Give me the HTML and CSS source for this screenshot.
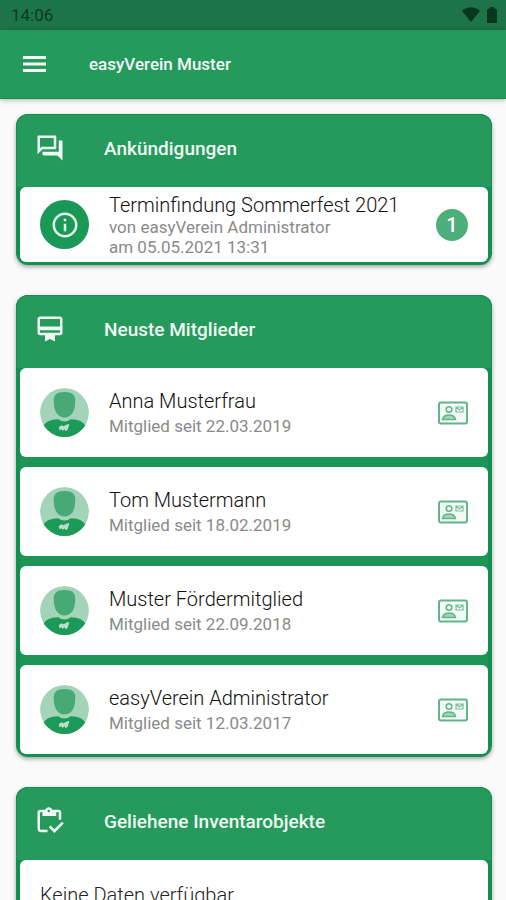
FILE: index.html
```
<!DOCTYPE html>
<html lang="de">
<head>
    <meta charset="UTF-8">
    <meta name="viewport" content="width=device-width, initial-scale=1.0">
    <title>easyVerein Muster</title>
    <link rel="stylesheet" href="styles.css">
</head>
<body>
    <!-- Shared icons -->
    <svg class="sprite" aria-hidden="true">
        <symbol id="avatar" viewBox="0 0 50 50">
            <clipPath id="avatarClip"><circle cx="25" cy="25" r="25"/></clipPath>
            <g clip-path="url(#avatarClip)">
                <circle cx="25" cy="25" r="25" fill="#a3d3b8"/>
                <path fill="#46a976" d="M14 13c0-6 3-9 11-9s11 3 11 9c0 11-4 17-11 17S14 24 14 13z"/>
                <path fill="#1c9a58" d="M3 40c2-5 7-8 16-8 3 3 9 3 12 0 9 0 14 3 16 8v12H3z"/>
                <path fill="#b9dfca" d="M19 40l3-2 2 1 4-2h2l-1 3-1 3-2 1-1-2-2 2-1-2-2 1z"/>
            </g>
        </symbol>
        <symbol id="contact" viewBox="0 0 30 24">
            <rect x="1" y="1.500" width="28" height="21" rx="2" fill="#f3faf6" stroke="#62b58a" stroke-width="2"/>
            <circle cx="11" cy="8.500" r="2.800" fill="none" stroke="#62b58a" stroke-width="1.600"/>
            <path d="M4.500 18.500c1-6 12-6 13 0z" fill="#a3d3b8" stroke="#62b58a" stroke-width="1.500"/>
            <path d="M18 6h7v5h-7zM18 6l3.500 3L25 6" fill="none" stroke="#78bf99" stroke-width="1.200"/>
        </symbol>
    </svg>

    <!-- Status Bar -->
    <div class="status-bar">
        <span>14:06</span>
        <div class="status-icons">
            <svg width="18" height="16" viewBox="0 0 18 16"><path d="M0 4c5-5 13-5 18 0L9 15z"/></svg>
            <svg width="10" height="16" viewBox="0 0 10 16"><path d="M3 0h4v1.500h1.500L10 3v13H0V3l1.500-1.500H3z"/></svg>
        </div>
    </div>

    <!-- App Bar -->
    <header class="app-bar">
        <button class="menu-button" aria-label="Menü">
            <svg width="23" height="16" viewBox="0 0 23 16"><path d="M0 0h23v3H0zM0 6.500h23v3H0zM0 13h23v3H0z"/></svg>
        </button>
        <h1>easyVerein Muster</h1>
    </header>

    <main>
        <section class="card">
            <div class="card-header">
                <svg class="card-icon" viewBox="0 0 24 24"><path d="M15 4v7H5.170L4 12.170V4h11m1-2H3c-.55 0-1 .45-1 1v14l4-4h10c.55 0 1-.45 1-1V3c0-.55-.45-1-1-1zm5 4h-2v9H6v2c0 .55.45 1 1 1h11l4 4V7c0-.55-.45-1-1-1z"/></svg>
                <h2>Ankündigungen</h2>
            </div>
            <div class="items">
                <article class="item news">
                    <div class="round-icon">
                        <svg width="30" height="30" viewBox="0 0 24 24"><path d="M11 7h2v2h-2zm0 4h2v6h-2zm1-9C6.480 2 2 6.480 2 12s4.480 10 10 10 10-4.480 10-10S17.520 2 12 2zm0 18c-4.410 0-8-3.590-8-8s3.590-8 8-8 8 3.590 8 8-3.590 8-8 8z"/></svg>
                    </div>
                    <div class="item-text">
                        <h3>Terminfindung Sommerfest 2021</h3>
                        <p>von easyVerein Administrator</p>
                        <p>am 05.05.2021 13:31</p>
                    </div>
                    <span class="badge">1</span>
                </article>
            </div>
        </section>

        <section class="card">
            <div class="card-header">
                <svg class="card-icon" viewBox="0 0 24 24"><path d="M20 2H4c-1.110 0-2 .89-2 2v11c0 1.110.89 2 2 2h4v5l4-2 4 2v-5h4c1.110 0 2-.89 2-2V4c0-1.110-.89-2-2-2zm0 13H4v-2h16v2zm0-5H4V4h16v6z"/></svg>
                <h2>Neuste Mitglieder</h2>
            </div>
            <div class="items">
                <article class="item">
                    <svg class="avatar"><use href="#avatar"/></svg>
                    <div class="item-text">
                        <h3>Anna Musterfrau</h3>
                        <p>Mitglied seit 22.03.2019</p>
                    </div>
                    <button class="contact" aria-label="Kontakt"><svg width="30" height="24"><use href="#contact"/></svg></button>
                </article>
                <article class="item">
                    <svg class="avatar"><use href="#avatar"/></svg>
                    <div class="item-text">
                        <h3>Tom Mustermann</h3>
                        <p>Mitglied seit 18.02.2019</p>
                    </div>
                    <button class="contact" aria-label="Kontakt"><svg width="30" height="24"><use href="#contact"/></svg></button>
                </article>
                <article class="item">
                    <svg class="avatar"><use href="#avatar"/></svg>
                    <div class="item-text">
                        <h3>Muster Fördermitglied</h3>
                        <p>Mitglied seit 22.09.2018</p>
                    </div>
                    <button class="contact" aria-label="Kontakt"><svg width="30" height="24"><use href="#contact"/></svg></button>
                </article>
                <article class="item">
                    <svg class="avatar"><use href="#avatar"/></svg>
                    <div class="item-text">
                        <h3>easyVerein Administrator</h3>
                        <p>Mitglied seit 12.03.2017</p>
                    </div>
                    <button class="contact" aria-label="Kontakt"><svg width="30" height="24"><use href="#contact"/></svg></button>
                </article>
            </div>
        </section>

        <section class="card">
            <div class="card-header">
                <svg class="card-icon" viewBox="0 0 24 24"><path d="M10 21H5c-1.660 0-3-1-3-3V5c0-1.100.9-2 2-2h4.200C8.600 1.800 9.700 1 11 1s2.400.8 2.800 2H19c1.100 0 2 .9 2 2v6h-2V5h-2v3H6V5H4v13c0 .6.4 1 1 1h5v2zM11 3a1 1 0 100 2 1 1 0 000-2zm10.600 9.500L23 14l-7.500 7.500L11 17l1.400-1.500 3.100 3.100z"/></svg>
                <h2>Geliehene Inventarobjekte</h2>
            </div>
            <div class="items">
                <div class="item empty">Keine Daten verfügbar.</div>
            </div>
        </section>
    </main>
</body>
</html>
```
FILE: styles.css
```
* { box-sizing: border-box; }
body { margin: 0; height: 100vh; display: flex; flex-direction: column; overflow: hidden; background-color: #fafafa; font-family: Roboto, sans-serif; }
h1, h2, h3, p { margin: 0; }
button { padding: 0; border: none; background: none; cursor: pointer; }
svg { display: block; flex-shrink: 0; }
.sprite { position: absolute; width: 0; height: 0; }

/* Top Bars */
.status-bar { flex-shrink: 0; height: 30px; padding: 0 9px 0 11px; display: flex; align-items: center; justify-content: space-between; background-color: #1d7448; color: #0b3d22; font-size: 17px; }
.status-icons { display: flex; gap: 7px; fill: #08371d; }
.app-bar { flex-shrink: 0; height: 69px; padding: 0 23px; display: flex; align-items: center; gap: 43px; background-color: #26995d; border-bottom: 1px solid #168c4e; box-shadow: 0 1px 5px rgba(0, 0, 0, 0.3); z-index: 1; }
.app-bar h1 { color: #f1faf4; font-size: 17px; font-weight: 500; }
.menu-button svg { fill: #f1faf4; }

/* Cards */
main { flex: 1; padding: 15px 14px 30px 16px; overflow-y: auto; scrollbar-width: none; }
.card { margin-bottom: 30px; padding: 0 4px 3px; background-color: #119150; border-radius: 12px; box-shadow: 0 2px 4px rgba(0, 0, 0, 0.35); }
.card-header { height: 73px; margin: 0 -4px; padding: 0 18px 6px; display: flex; align-items: center; gap: 39px; background-color: #26995d; border: 1px solid #119150; border-bottom: none; border-radius: 12px 12px 0 0; }
.card-header h2 { color: #eef9f2; font-size: 19px; font-weight: 500; }
.card-icon { width: 30px; height: 30px; fill: #eef9f2; }
.items { display: flex; flex-direction: column; gap: 10px; background-color: #1c9556; border-radius: 6px; }
.item { min-height: 89px; padding: 0 20px; display: flex; align-items: center; gap: 20px; background-color: #fff; border-radius: 6px; }
.item-text { flex: 1; }
.item h3 { color: #111; font-size: 20px; font-weight: 300; line-height: 26px; }
.item p { color: #8a8a8a; font-size: 17px; line-height: 24px; }
.item.news { min-height: 75px; }
.item.news h3 { line-height: 24px; }
.item.news p { line-height: 20px; }
.avatar { width: 49px; height: 49px; }
.round-icon { width: 49px; height: 49px; display: flex; align-items: center; justify-content: center; background-color: #1a9857; border-radius: 50%; fill: #e4f4ea; }
.badge { width: 32px; height: 32px; display: flex; align-items: center; justify-content: center; background-color: #4cae7b; border-radius: 50%; color: #fff; font-size: 20px; font-weight: 500; }
.item.empty { min-height: 70px; color: #222; font-size: 20px; font-weight: 300; }
```
